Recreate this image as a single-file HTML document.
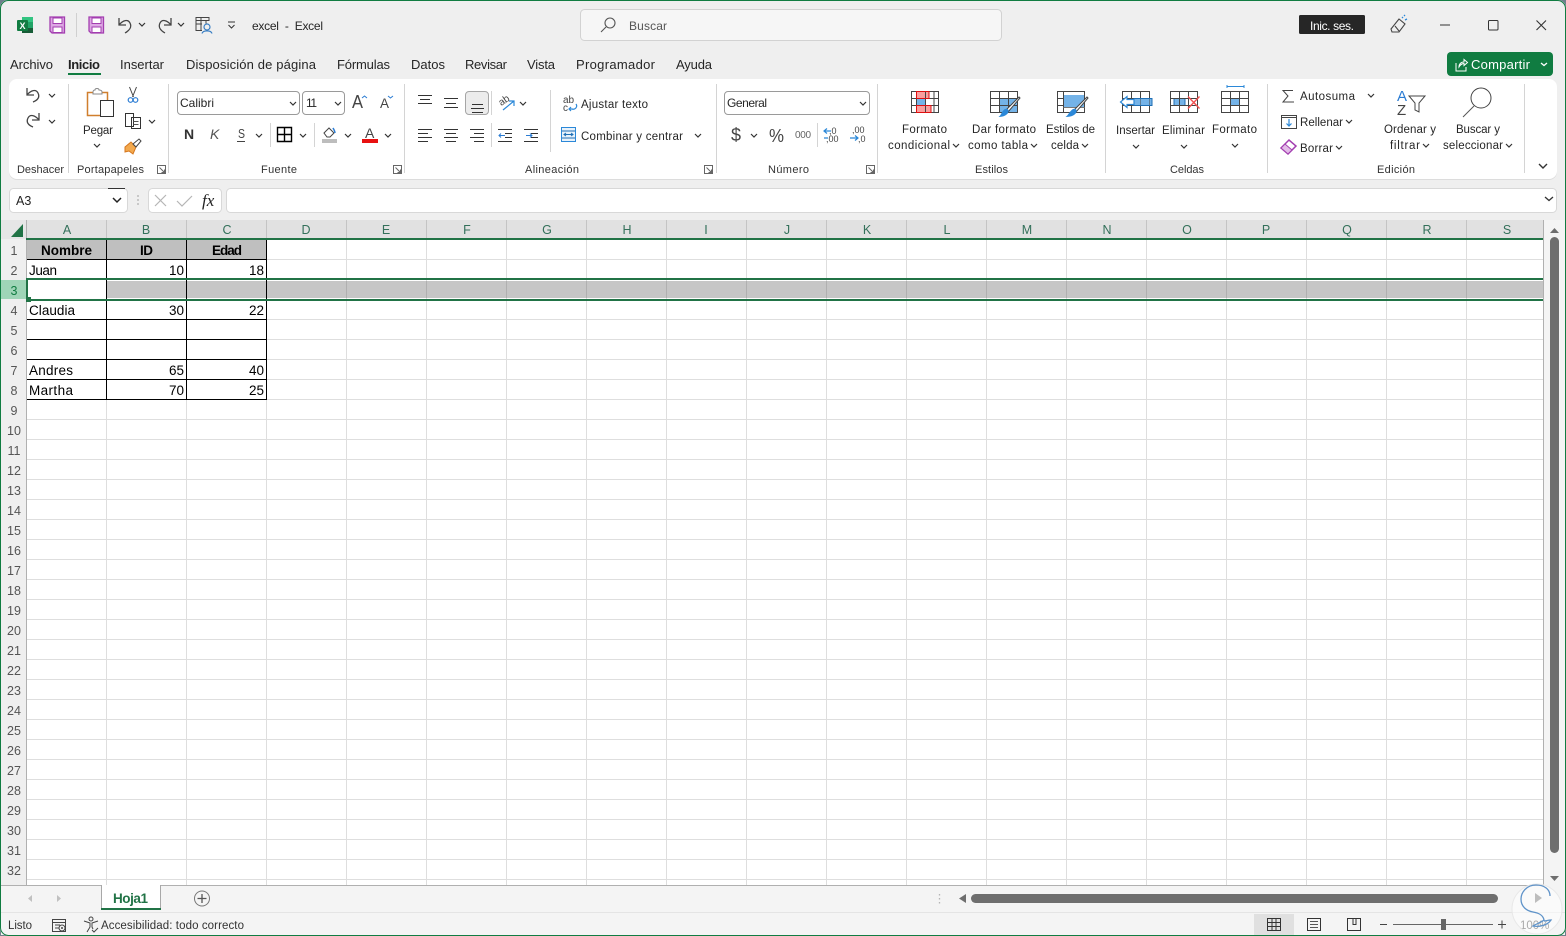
<!DOCTYPE html>
<html lang="es"><head><meta charset="utf-8"><title>excel - Excel</title>
<style>
html,body{margin:0;padding:0;background:#6f7f8c;overflow:hidden;width:1566px;height:936px}
svg{display:block;position:absolute;left:0;top:0}
text{font-family:"Liberation Sans",sans-serif;font-size:12px;fill:#262626;white-space:pre}
.t{font-size:13px;fill:#262626}
.r{font-size:11.5px;fill:#262626}
.g{font-size:11px;fill:#333}
.c{font-size:13.5px;fill:#000}
.b{font-weight:bold}
.rh{font-size:12.5px;fill:#555;text-anchor:middle}
.ch{font-size:12.5px;fill:#33705a;text-anchor:middle}
.e{text-anchor:end}
.l{stroke:#333;stroke-width:1;fill:none}
.l2{stroke:#444;stroke-width:1.300;fill:none}
</style></head><body>
<svg width="1566" height="936" viewBox="0 0 1566 936" xmlns="http://www.w3.org/2000/svg">
<defs>
<path id="v" d="M0 0l3 3 3-3" fill="none" stroke="#333" stroke-width="1.200"/>
<pattern id="gr" x="27" y="240" width="80" height="20" patternUnits="userSpaceOnUse">
<rect width="80" height="20" fill="#fff"/><rect x="79" width="1" height="20" fill="#dedede"/><rect y="19" width="80" height="1" fill="#dedede"/>
</pattern>
<path id="dlg" d="M0 0h8v8h-8zM2 2l5 5M7 4v3h-3" fill="none" stroke="#666" stroke-width="1"/>
</defs>

<rect x="0" y="0" width="1566" height="936" rx="8" fill="#efefef"/>

<!-- QAT -->
<rect x="22" y="17" width="11" height="16" fill="#21a366"/><rect x="22" y="17" width="11" height="5" fill="#33c481"/><rect x="22" y="28" width="11" height="5" fill="#185c37"/>
<rect x="17" y="20" width="11" height="11" rx="1" fill="#107c41"/>
<text x="19.500" y="29" style="font-size:9px;fill:#fff;font-weight:bold">X</text>
<path d="M50 17h14.500v16h-12.500l-2-2z" fill="#dda8e4" stroke="#a33eb0" stroke-width="1.300"/><rect x="53" y="18" width="9" height="5.500" fill="#fff" stroke="#a33eb0"/><rect x="53" y="27" width="9" height="5.500" fill="#fff" stroke="#a33eb0"/>
<path d="M89 17h14.500v16h-12.500l-2-2z" fill="#dda8e4" stroke="#a33eb0" stroke-width="1.300"/><rect x="92" y="18" width="9" height="5.500" fill="#fff" stroke="#a33eb0"/><rect x="92" y="27" width="9" height="5.500" fill="#fff" stroke="#a33eb0"/>
<rect x="76" y="13" width="1" height="24" fill="#d0d0d0"/>
<path d="M119 18v7h7M119 25c4-5 9-6 11-2 2 4 0 7-5 10" class="l2"/><use href="#v" x="139" y="23"/>
<path d="M171 18v7h-7M171 25c-4-5-9-6-11-2-2 4 0 7 5 10" class="l2"/><use href="#v" x="178" y="23"/>
<path d="M196 17.500h13v3h-13zM196 17.500v13h6M196 24h6M201 17.500v13M206 20.500v3" stroke="#444" fill="none"/><circle cx="207" cy="27" r="3" fill="#efefef" stroke="#3a7fc4" stroke-width="1.200"/><path d="M202 33.500c1-3.500 9-3.500 10 0" stroke="#3a7fc4" fill="none" stroke-width="1.200"/>
<path d="M228 22h7M228.500 25l3 3 3-3" class="l"/>
<text x="252" y="30" textLength="71" lengthAdjust="spacing" style="font-size:12px">excel  -  Excel</text>

<rect x="580.500" y="9.500" width="421" height="31" rx="4" fill="#f6f6f6" stroke="#d2d2d2"/>
<circle cx="610" cy="23" r="5" fill="none" stroke="#555" stroke-width="1.100"/><path d="M606 27l-5 5" stroke="#555" stroke-width="1.100"/>
<text x="629" y="30" textLength="38" style="fill:#555">Buscar</text>

<rect x="1299" y="15" width="66" height="19" rx="1.500" fill="#262626"/>
<text x="1310" y="30" textLength="44" style="fill:#fff">Inic. ses.</text>
<path d="M1391 29l8-10 6 5-6 8-7 0z M1395 26l4 5" fill="none" stroke="#444" stroke-width="1.100"/><path d="M1402 18l1-1M1405 20l2-1M1404 16l1-1" stroke="#2b88d8" stroke-width="1.300"/>
<rect x="1440" y="24.500" width="10" height="1" fill="#333"/>
<rect x="1488.500" y="20.500" width="9.500" height="9.500" rx="1" fill="none" stroke="#333"/>
<path d="M1536.500 20.500l9.500 9.500M1546 20.500l-9.500 9.500" stroke="#333" stroke-width="1.100"/>

<!-- tabs -->
<text class="t" x="10" y="69" textLength="43">Archivo</text>
<text class="t b" x="68" y="69" textLength="32" style="fill:#222">Inicio</text>
<rect x="68" y="73" width="33" height="2" fill="#107c41"/>
<text class="t" x="120" y="69" textLength="44">Insertar</text>
<text class="t" x="186" y="69" textLength="130">Disposición de página</text>
<text class="t" x="337" y="69" textLength="53">Fórmulas</text>
<text class="t" x="411" y="69" textLength="34">Datos</text>
<text class="t" x="465" y="69" textLength="42">Revisar</text>
<text class="t" x="527" y="69" textLength="28">Vista</text>
<text class="t" x="576" y="69" textLength="79">Programador</text>
<text class="t" x="676" y="69" textLength="36">Ayuda</text>

<rect x="1447" y="52" width="106" height="24" rx="4" fill="#107c41"/>
<path d="M1456 63v8h10v-4M1459 67c0-3 2-5 5-5v-2.500l3.500 3-3.500 3v-2c-2 0-3.500 1-5 3.500z" fill="none" stroke="#fff" stroke-width="1"/>
<text x="1471" y="69" textLength="59" style="font-size:13px;fill:#fff">Compartir</text>
<path d="M1541 63l3 2.500 3-2.500" fill="none" stroke="#fff" stroke-width="1.300"/>

<!-- ribbon -->
<rect x="9" y="80" width="1548" height="100" rx="8" fill="#dcdcdc"/>
<rect x="9" y="79" width="1548" height="100" rx="8" fill="#fff"/>
<g fill="#d4d4d4"><rect x="68" y="84" width="1" height="89"/><rect x="168" y="84" width="1" height="89"/><rect x="404" y="84" width="1" height="89"/><rect x="716" y="84" width="1" height="89"/><rect x="877" y="84" width="1" height="89"/><rect x="1105" y="84" width="1" height="89"/><rect x="1267" y="84" width="1" height="89"/><rect x="1524" y="84" width="1" height="89"/>
<rect x="270" y="123" width="1" height="24"/><rect x="314" y="123" width="1" height="24"/><rect x="491" y="91" width="1" height="24"/><rect x="491" y="123" width="1" height="24"/><rect x="550" y="90" width="1" height="62"/><rect x="817" y="123" width="1" height="24"/></g>

<!-- deshacer -->
<path d="M27 88v7h7M27 95c4-5 9-6 11-2 2 4 0 7-5 9" class="l2"/><use href="#v" x="49" y="94"/>
<path d="M39 113v7h-7M39 120c-4-5-9-6-11-2-2 4 0 7 5 9" class="l2"/><use href="#v" x="49" y="120"/>

<!-- portapapeles -->
<rect x="87.500" y="92.500" width="20" height="23" fill="#fff" stroke="#d07f2d" stroke-width="1.500"/>
<path d="M93 92c0-2 2-2 2-2 0-2 4-2 4 0 0 0 3 0 3 2v2h-9z" fill="#fff" stroke="#888"/>
<rect x="100.500" y="100.500" width="13" height="16" fill="#fff" stroke="#333"/>
<text class="r" x="83" y="134" textLength="30">Pegar</text><use href="#v" x="94" y="144"/>
<path d="M129.500 87l4 10M136.500 87l-4 10" stroke="#444" fill="none"/><circle cx="130.500" cy="100" r="2.300" fill="none" stroke="#2b7cd3" stroke-width="1.200"/><circle cx="135.500" cy="100" r="2.300" fill="none" stroke="#2b7cd3" stroke-width="1.200"/>
<path d="M125.500 113.500h8v13h-8zM131.500 117.500h9v11h-9z" fill="#fff" stroke="#333"/><path d="M133.500 121.500h5M133.500 124.500h5" stroke="#555"/><use href="#v" x="149" y="120"/>
<path d="M125 147l6-5 5 5-3 7-4-3-4 1z" fill="#f3a94e" stroke="#d5761d"/><path d="M133 144l6-5 2 2-5 6z" fill="#fff" stroke="#444"/>

<!-- fuente -->
<rect x="177.500" y="91.500" width="122" height="23" rx="3.500" fill="#fff" stroke="#9a9a9a"/>
<text x="180" y="107" textLength="34">Calibri</text><use href="#v" x="290" y="102"/>
<rect x="302.500" y="91.500" width="42" height="23" rx="3.500" fill="#fff" stroke="#9a9a9a"/>
<text x="306" y="107" textLength="11">11</text><use href="#v" x="335" y="102"/>
<text x="352" y="108" textLength="11" lengthAdjust="spacingAndGlyphs" style="font-size:18px;fill:#444">A</text><path d="M362 98l2.500-2 2.500 2" fill="none" stroke="#2b7cd3"/>
<text x="380" y="108" textLength="9" lengthAdjust="spacingAndGlyphs" style="font-size:14px;fill:#444">A</text><path d="M388 96l2.500 2 2.500-2" fill="none" stroke="#2b7cd3"/>
<text x="184" y="139" class="b" style="font-size:14px;fill:#333">N</text>
<text x="210" y="139" style="font-size:14px;font-style:italic;fill:#555">K</text>
<text x="238" y="138" style="font-size:13px;fill:#444" textLength="7" lengthAdjust="spacingAndGlyphs">S</text><rect x="237" y="141" width="8" height="1" fill="#444"/><use href="#v" x="256" y="134"/>
<path d="M277.500 127.500h14v14h-14zM284.500 127.500v14M277.500 134.500h14" fill="none" stroke="#000" stroke-width="1.400"/><use href="#v" x="300" y="134"/>
<path d="M324 133l5-5 5 5-4 4h-3z" fill="#fff" stroke="#444"/><path d="M333 128c1 2 2 3 2 5" stroke="#2b7cd3" fill="none" stroke-width="1.500"/><rect x="322" y="139" width="15" height="4" fill="#bdbdbd"/><use href="#v" x="345" y="134"/>
<text x="365" y="138" style="font-size:14px;fill:#444">A</text><rect x="362" y="139" width="16" height="4" fill="#e81010"/><use href="#v" x="385" y="134"/>

<!-- alineacion -->
<rect x="465.500" y="91.500" width="23" height="23" rx="3.500" fill="#ececec" stroke="#a5a5a5"/>
<path class="l" d="M418 95.500h14M420 99.500h10M418 103.500h14M444 98.500h14M446 103.500h10M444 107.500h14M472 104.500h11M471 108.500h13M472 112.500h11"/>
<path class="l" d="M418 129.500h14M418 133.500h10M418 137.500h14M418 141.500h10M444 129.500h14M446 133.500h10M444 137.500h14M446 141.500h10M470 129.500h14M474 133.500h10M470 137.500h14M474 141.500h10"/>
<path class="l" d="M498 129.500h14M505 133.500h7M505 137.500h7M498 141.500h14M524 129.500h14M531 133.500h7M531 137.500h7M524 141.500h14"/>
<path d="M505 135.500h-6m2-2l-2 2 2 2M526 135.500h6m-2-2l2 2-2 2" fill="none" stroke="#2b7cd3"/>
<text x="498" y="104" transform="rotate(-35 503 100)" style="font-size:10px;fill:#444">ab</text><path d="M503 110l11-9m-5 0h5v5" fill="none" stroke="#2b88d8" stroke-width="1.200"/><use href="#v" x="520" y="102"/>
<text x="563" y="103" style="font-size:10px;fill:#444">ab</text><text x="563" y="111" style="font-size:10px;fill:#444">c</text><path d="M576 104c2 3-1 6-4 5h-3m2-2l-2 2 2 2" fill="none" stroke="#2b88d8" stroke-width="1.200"/>
<text class="r" x="581" y="108" textLength="67">Ajustar texto</text>
<rect x="561.500" y="127.500" width="14" height="14" fill="#e8f2fb" stroke="#2b88d8"/><path d="M562 131h13M562 138h13M564 134.500h9m-2-1.500l2 1.500-2 1.500m-5-3l-2 1.500 2 1.500" fill="none" stroke="#1f6fb5"/>
<text class="r" x="581" y="140" textLength="102">Combinar y centrar</text><use href="#v" x="695" y="134"/>

<!-- numero -->
<rect x="724.500" y="91.500" width="145" height="23" rx="3.500" fill="#fff" stroke="#9a9a9a"/>
<text x="727" y="107" textLength="40">General</text><use href="#v" x="860" y="102"/>
<text x="731" y="141" style="font-size:18px;fill:#444">$</text><use href="#v" x="751" y="134"/>
<text x="769" y="142" textLength="15" lengthAdjust="spacingAndGlyphs" style="font-size:18px;fill:#444">%</text>
<text x="795" y="138" style="font-size:10px;fill:#666" textLength="16">000</text>
<path d="M831 131h-7m3-2.500l-3 2.500 3 2.500M824 138h4" fill="none" stroke="#2b88d8" stroke-width="1.200"/>
<text x="829" y="134" style="font-size:9px;fill:#444">,0</text><text x="826" y="142" style="font-size:9px;fill:#444">,00</text>
<text x="852" y="133" style="font-size:9px;fill:#444">,00</text><text x="858" y="142" style="font-size:9px;fill:#444">,0</text>
<path d="M850 138h8m-3-2.500l3 2.500-3 2.500" fill="none" stroke="#2b88d8" stroke-width="1.200"/>

<!-- estilos -->
<rect x="911.500" y="91.500" width="27" height="21" fill="#fff"/>
<rect x="916.500" y="91.500" width="12.500" height="7" fill="#fa9e9e" stroke="#e01010"/><rect x="916.500" y="98.500" width="9" height="7" fill="#74b3e8"/><rect x="916.500" y="105.500" width="14.500" height="7" fill="#fa9e9e" stroke="#e01010"/>
<path d="M911.500 91.500h27v21h-27zM911.500 98.500h27M911.500 105.500h27M916.500 91.500v21M925.500 91.500v21M934 91.500v21" fill="none" stroke="#444"/>
<rect x="916.500" y="91.500" width="12.500" height="7" fill="none" stroke="#e01010"/><rect x="916.500" y="105.500" width="14.500" height="7" fill="none" stroke="#e01010"/>
<rect x="990.500" y="91.500" width="27" height="21" fill="#fff"/><rect x="999.500" y="98" width="18" height="15" fill="#74b3e8"/><path d="M990.500 91.500h27v21h-27zM990.500 98.500h27M990.500 105.500h27M999.500 91.500v21M1008.500 91.500v21" stroke="#444" fill="none"/>
<path d="M1019 97l-13 13 2 2 12-14z" fill="#fff" stroke="#444"/><path d="M1005 109c3-1 4 1 3.500 3-1 3-5 5-10 5 3-2 3-6 6.500-8z" fill="#2b88d8"/>
<rect x="1057.500" y="91.500" width="27" height="21" fill="#fff"/><rect x="1063" y="95" width="22" height="13" fill="#74b3e8"/><path d="M1057.500 91.500h27v21h-27zM1057.500 98.500h6M1057.500 105.500h6M1063.500 91.500v21" stroke="#444" fill="none"/><path d="M1063.500 107.500h21" stroke="#777"/>
<path d="M1087 97l-13 13 2 2 12-14z" fill="#fff" stroke="#444"/><path d="M1073 109c3-1 4 1 3.500 3-1 3-5 5-11 5 3-2 4-6 7.500-8z" fill="#2b88d8"/>
<text class="r" x="902" y="133" textLength="45">Formato</text>
<text class="r" x="888" y="149" textLength="62">condicional</text><use href="#v" x="953" y="144"/>
<text class="r" x="972" y="133" textLength="64">Dar formato</text>
<text class="r" x="968" y="149" textLength="60">como tabla</text><use href="#v" x="1031" y="144"/>
<text class="r" x="1046" y="133" textLength="49">Estilos de</text>
<text class="r" x="1051" y="149" textLength="28">celda</text><use href="#v" x="1082" y="144"/>
<text class="r" x="1116" y="134" textLength="39">Insertar</text><use href="#v" x="1133" y="145"/>
<text class="r" x="1162" y="134" textLength="43">Eliminar</text><use href="#v" x="1181" y="145"/>
<text class="r" x="1212" y="133" textLength="45">Formato</text><use href="#v" x="1232" y="144"/>
<text class="r" x="1300" y="100" textLength="55">Autosuma</text><use href="#v" x="1368" y="94"/>
<text class="r" x="1300" y="126" textLength="43">Rellenar</text><use href="#v" x="1346" y="120"/>
<text class="r" x="1300" y="152" textLength="33">Borrar</text><use href="#v" x="1336" y="146"/>
<text class="r" x="1384" y="133" textLength="52">Ordenar y</text>
<text class="r" x="1390" y="149" textLength="30">filtrar</text><use href="#v" x="1423" y="144"/>
<text class="r" x="1456" y="133" textLength="44">Buscar y</text>
<text class="r" x="1443" y="149" textLength="60">seleccionar</text><use href="#v" x="1506" y="144"/>

<!-- celdas -->
<rect x="1122.500" y="91.500" width="27" height="21" fill="#fff"/><rect x="1134" y="98.500" width="18" height="7" fill="#74b3e8" stroke="#1f6fb5"/><path d="M1122.500 91.500h27v21h-27zM1131.500 91.500v21M1140.500 91.500v21M1122.500 98.500h27M1122.500 105.500h27" stroke="#444" fill="none"/><rect x="1134" y="98.500" width="18" height="7" fill="#74b3e8" fill-opacity=".5" stroke="#1f6fb5"/>
<path d="M1134 99.500h-7v-3l-6.500 5.500 6.500 5.500v-3h7z" fill="#fff" stroke="#2b88d8" stroke-width="1.200"/>
<rect x="1170.500" y="91.500" width="27" height="21" fill="#fff"/><rect x="1174" y="98.500" width="11" height="7" fill="#74b3e8" stroke="#1f6fb5"/><path d="M1170.500 91.500h27v21h-27zM1179.500 91.500v21M1188.500 91.500v21M1170.500 98.500h27M1170.500 105.500h27" stroke="#444" fill="none"/><path d="M1188 96.500l11.500 12M1199.500 96.500l-11.500 12" stroke="#f25050" stroke-width="1.400"/>
<rect x="1221.500" y="91.500" width="27" height="21" fill="#fff"/><rect x="1230" y="98" width="10" height="7.500" fill="#74b3e8"/><path d="M1221.500 91.500h27v21h-27zM1230.500 91.500v21M1239.500 91.500v21M1221.500 98.500h27M1221.500 105.500h27" stroke="#444" fill="none"/><path d="M1227 86.500h17M1227 85v3M1244 85v3" stroke="#2b88d8"/>

<!-- edicion -->
<path d="M1293 90.500h-10l5 5.500-5 6h11" fill="none" stroke="#444"/>
<rect x="1281.500" y="115.500" width="15" height="13" fill="#fff" stroke="#444"/><path d="M1282 117.500h14" stroke="#444"/><path d="M1289 119v7m-2.500-2.500l2.500 2.500 2.500-2.500" stroke="#2b88d8" fill="none" stroke-width="1.200"/>
<path d="M1281 148l8-8 7 6-8 8z" fill="#fff" stroke="#a33eb0" stroke-width="1.500"/><path d="M1281 148l4-4 7 6-4 4z" fill="#e3bce8" stroke="#a33eb0" stroke-width="1"/>
<text x="1397" y="101" style="font-size:15px;fill:#2b7cd3">A</text><text x="1397" y="115" style="font-size:15px;fill:#444">Z</text>
<path d="M1409 96h16l-6 7v9l-4-2v-7z" fill="#fff" stroke="#444"/>
<circle cx="1481" cy="98" r="10" fill="#fff" stroke="#444"/><path d="M1474 106l-11 11" stroke="#555"/>
<path d="M1539 164l4 4 4-4" fill="none" stroke="#333" stroke-width="1.400"/>

<text class="g" x="17" y="173" textLength="47">Deshacer</text>
<text class="g" x="77" y="173" textLength="67">Portapapeles</text>
<text class="g" x="261" y="173" textLength="36">Fuente</text>
<text class="g" x="525" y="173" textLength="54">Alineación</text>
<text class="g" x="768" y="173" textLength="41">Número</text>
<text class="g" x="975" y="173" textLength="33">Estilos</text>
<text class="g" x="1170" y="173" textLength="34">Celdas</text>
<text class="g" x="1377" y="173" textLength="38">Edición</text>
<use href="#dlg" x="157.500" y="165.500"/><use href="#dlg" x="393.500" y="165.500"/><use href="#dlg" x="704.500" y="165.500"/><use href="#dlg" x="866.500" y="165.500"/>

<!-- formula bar -->
<rect x="9.500" y="188.500" width="118" height="24" rx="4" fill="#fff" stroke="#d8d8d8"/>
<text x="16" y="205" style="font-size:12.500px;fill:#222">A3</text>
<rect x="108" y="188" width="17" height="1" fill="#333"/>
<path d="M113 198l4 4 4-4" fill="none" stroke="#222" stroke-width="1.500"/>
<path d="M138 195.500v1M138 199.500v1M138 203.500v1" stroke="#888" stroke-width="1.500"/>
<rect x="148.500" y="188.500" width="73" height="24" rx="4" fill="#fff" stroke="#d8d8d8"/>
<path d="M155 195l11 11M166 195l-11 11" stroke="#b5b5b5" stroke-width="1.200"/><path d="M177 201l5 5 10-10" fill="none" stroke="#b5b5b5" stroke-width="1.200"/>
<text x="202" y="206" style="font-family:'Liberation Serif',serif;font-style:italic;font-size:17px;fill:#222">fx</text>
<rect x="226.500" y="188.500" width="1330" height="24" rx="4" fill="#fff" stroke="#d8d8d8"/>
<path d="M1545 197l4 3.500 4-3.500" fill="none" stroke="#333" stroke-width="1.300"/>

<!-- grid -->
<rect x="1" y="220" width="25" height="665" fill="#efefef"/>
<rect x="26" y="220" width="1518" height="19" fill="#e1e1e1"/>
<rect x="1" y="220" width="26" height="19" fill="#e6e6e6"/>
<path d="M23 224v13h-12z" fill="#217346"/>
<g fill="#c4c4c4"><rect x="106" y="220" width="1" height="18"/><rect x="186" y="220" width="1" height="18"/><rect x="266" y="220" width="1" height="18"/><rect x="346" y="220" width="1" height="18"/><rect x="426" y="220" width="1" height="18"/><rect x="506" y="220" width="1" height="18"/><rect x="586" y="220" width="1" height="18"/><rect x="666" y="220" width="1" height="18"/><rect x="746" y="220" width="1" height="18"/><rect x="826" y="220" width="1" height="18"/><rect x="906" y="220" width="1" height="18"/><rect x="986" y="220" width="1" height="18"/><rect x="1066" y="220" width="1" height="18"/><rect x="1146" y="220" width="1" height="18"/><rect x="1226" y="220" width="1" height="18"/><rect x="1306" y="220" width="1" height="18"/><rect x="1386" y="220" width="1" height="18"/><rect x="1466" y="220" width="1" height="18"/></g>
<text class="ch" x="67" y="234">A</text><text class="ch" x="146" y="234">B</text><text class="ch" x="227" y="234">C</text><text class="ch" x="306" y="234">D</text><text class="ch" x="386" y="234">E</text><text class="ch" x="467" y="234">F</text><text class="ch" x="547" y="234">G</text><text class="ch" x="627" y="234">H</text><text class="ch" x="706" y="234">I</text><text class="ch" x="787" y="234">J</text><text class="ch" x="867" y="234">K</text><text class="ch" x="947" y="234">L</text><text class="ch" x="1027" y="234">M</text><text class="ch" x="1107" y="234">N</text><text class="ch" x="1187" y="234">O</text><text class="ch" x="1266" y="234">P</text><text class="ch" x="1347" y="234">Q</text><text class="ch" x="1427" y="234">R</text><text class="ch" x="1507" y="234">S</text>

<rect x="27" y="240" width="1516" height="645" fill="url(#gr)"/>
<rect x="26" y="220" width="1" height="665" fill="#b0b0b0"/>
<rect x="1543" y="220" width="1" height="665" fill="#b0b0b0"/>

<rect x="27" y="240" width="240" height="19" fill="#bfbfbf"/>
<rect x="107" y="281" width="1436" height="17" fill="#c6c6c6"/>
<g fill="#b0b0b0"><rect x="346" y="281" width="1" height="17"/><rect x="426" y="281" width="1" height="17"/><rect x="506" y="281" width="1" height="17"/><rect x="586" y="281" width="1" height="17"/><rect x="666" y="281" width="1" height="17"/><rect x="746" y="281" width="1" height="17"/><rect x="826" y="281" width="1" height="17"/><rect x="906" y="281" width="1" height="17"/><rect x="986" y="281" width="1" height="17"/><rect x="1066" y="281" width="1" height="17"/><rect x="1146" y="281" width="1" height="17"/><rect x="1226" y="281" width="1" height="17"/><rect x="1306" y="281" width="1" height="17"/><rect x="1386" y="281" width="1" height="17"/><rect x="1466" y="281" width="1" height="17"/></g>
<g fill="#000"><rect x="106" y="240" width="1" height="160"/><rect x="186" y="240" width="1" height="160"/><rect x="266" y="240" width="1" height="160"/>
<rect x="27" y="259" width="240" height="1"/><rect x="27" y="319" width="240" height="1"/><rect x="27" y="339" width="240" height="1"/><rect x="27" y="359" width="240" height="1"/><rect x="27" y="379" width="240" height="1"/><rect x="27" y="399" width="240" height="1"/></g>
<rect x="1" y="280" width="25" height="19" fill="#9fd5b7"/>
<g fill="#217346"><rect x="26" y="238" width="1517" height="2"/><rect x="26" y="278" width="1517" height="2"/><rect x="26" y="299" width="1517" height="2"/><rect x="26" y="278" width="2" height="23"/><rect x="26" y="297" width="5" height="5"/></g>

<text class="c b" x="41" y="255" textLength="51">Nombre</text>
<text class="c b" x="140" y="255" textLength="13">ID</text>
<text class="c b" x="212" y="255" textLength="30">Edad</text>
<text class="c" x="29" y="275" textLength="28">Juan</text>
<text class="c e" x="184" y="275">10</text><text class="c e" x="264" y="275">18</text>
<text class="c" x="29" y="315" textLength="46">Claudia</text>
<text class="c e" x="184" y="315">30</text><text class="c e" x="264" y="315">22</text>
<text class="c" x="29" y="375" textLength="44">Andres</text>
<text class="c e" x="184" y="375">65</text><text class="c e" x="264" y="375">40</text>
<text class="c" x="29" y="395" textLength="44">Martha</text>
<text class="c e" x="184" y="395">70</text><text class="c e" x="264" y="395">25</text>

<text class="rh" x="14" y="255">1</text><text class="rh" x="14" y="275">2</text><text class="rh" x="14" y="295" style="fill:#107c41">3</text><text class="rh" x="14" y="315">4</text><text class="rh" x="14" y="335">5</text><text class="rh" x="14" y="355">6</text><text class="rh" x="14" y="375">7</text><text class="rh" x="14" y="395">8</text><text class="rh" x="14" y="415">9</text><text class="rh" x="14" y="435">10</text><text class="rh" x="14" y="455">11</text><text class="rh" x="14" y="475">12</text><text class="rh" x="14" y="495">13</text><text class="rh" x="14" y="515">14</text><text class="rh" x="14" y="535">15</text><text class="rh" x="14" y="555">16</text><text class="rh" x="14" y="575">17</text><text class="rh" x="14" y="595">18</text><text class="rh" x="14" y="615">19</text><text class="rh" x="14" y="635">20</text><text class="rh" x="14" y="655">21</text><text class="rh" x="14" y="675">22</text><text class="rh" x="14" y="695">23</text><text class="rh" x="14" y="715">24</text><text class="rh" x="14" y="735">25</text><text class="rh" x="14" y="755">26</text><text class="rh" x="14" y="775">27</text><text class="rh" x="14" y="795">28</text><text class="rh" x="14" y="815">29</text><text class="rh" x="14" y="835">30</text><text class="rh" x="14" y="855">31</text><text class="rh" x="14" y="875">32</text>

<!-- vertical scrollbar -->
<rect x="1544" y="220" width="21" height="665" fill="#f4f4f4"/>
<path d="M1550 233l4.500-5 4.500 5z" fill="#6e6e6e"/>
<rect x="1550" y="237" width="9" height="616" rx="4.500" fill="#6e6e6e"/>
<path d="M1550 876l4.500 5 4.500-5z" fill="#6e6e6e"/>

<!-- sheet tabs -->
<rect x="1" y="885" width="1564" height="28" fill="#f4f4f4"/>
<rect x="1" y="885" width="1543" height="1" fill="#b0b0b0"/>
<rect x="1" y="912" width="1564" height="1" fill="#e4e4e4"/>
<path d="M32 895v7l-4-3.500zM57 895v7l4-3.500z" fill="#c0c0c0"/>
<rect x="101" y="885" width="60" height="25" fill="#fff"/>
<path d="M101.500 885v24M160.500 885v24" stroke="#a8a8a8"/>
<rect x="101" y="908" width="60" height="2" fill="#217346"/>
<text x="113" y="903" textLength="35" class="b" style="font-size:13.500px;fill:#217346">Hoja1</text>
<circle cx="202" cy="898.500" r="7.500" fill="none" stroke="#777"/><path d="M197.500 898.500h9M202 894v9" stroke="#555" stroke-width="1.300"/>
<path d="M939.500 894v1.500M939.500 898v1.500M939.500 902v1.500" stroke="#b5b5b5" stroke-width="1.300"/>
<path d="M966 894v9l-7-4.500z" fill="#6e6e6e"/>
<rect x="971" y="894" width="527" height="9" rx="4.500" fill="#6e6e6e"/>

<!-- status bar -->
<rect x="1" y="913" width="1564" height="22" fill="#f4f4f4"/>
<text x="8" y="929" textLength="24" style="font-size:11.500px;fill:#333">Listo</text>
<path d="M52.500 919.500h13v12h-13zM52.500 922.500h13M55 925h5M55 928h4" fill="none" stroke="#444"/><circle cx="62" cy="928" r="3" fill="#f4f4f4" stroke="#444"/><circle cx="62" cy="928" r="1" fill="#444"/>
<circle cx="91" cy="919" r="2" fill="none" stroke="#444"/><path d="M84 921l6 2v4l-3 5M98 921l-6 2v4l1 2" fill="none" stroke="#444"/><path d="M92 930l2 2 4-4" fill="none" stroke="#444" stroke-width="1"/>
<text x="101" y="929" textLength="143" style="font-size:11.500px;fill:#333">Accesibilidad: todo correcto</text>
<rect x="1254" y="914" width="40" height="21" fill="#e0e0e0"/>
<path d="M1267.500 918.500h13v12h-13zM1267.500 922.500h13M1267.500 926.500h13M1272 918.500v12M1276 918.500v12" fill="none" stroke="#333"/>
<path d="M1307.500 918.500h13v12h-13z" fill="none" stroke="#333"/><path d="M1310 921.500h8M1310 924.500h8M1310 927.500h8" stroke="#555"/>
<path d="M1347.500 918.500h13v12h-13zM1353 918.500v6h3v-6" fill="none" stroke="#333"/>
<path d="M1380 924.500h7" stroke="#444"/>
<rect x="1393" y="924" width="100" height="1" fill="#666"/>
<rect x="1441" y="919" width="5" height="11" fill="#666"/>
<path d="M1498 924.500h8M1502 920.500v8" stroke="#444"/>
<text x="1520" y="929" style="font-size:11.500px;fill:#555">100%</text>

<!-- watermark -->
<circle cx="1537" cy="909" r="25" fill="#fff" fill-opacity=".5" stroke="#e8e8e8"/>
<path d="M1535 893v10l7-5z" fill="#bdbdbd"/>
<path d="M1550 896c0-7-6-11-14-11-9 0-15 7-15 14 0 8 6 12 12 13 6 1 10 3 11 8-2 2-8 4-11 6 5 1 14 0 18-6-3 0-5 1-7 1" fill="none" stroke="#5f93c9" stroke-width="1.300"/>

<rect x=".5" y=".5" width="1565" height="935" rx="8" fill="none" stroke="#107c41"/>
</svg>
</body></html>
